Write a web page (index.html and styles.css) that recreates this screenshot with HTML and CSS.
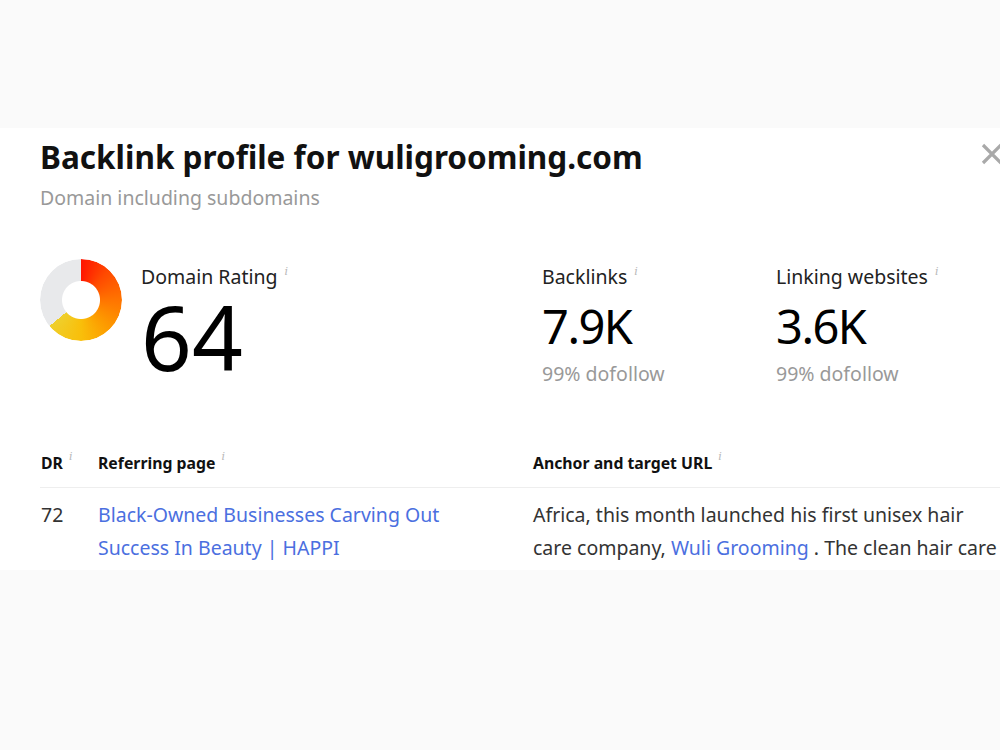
FILE: index.html
```html
<!DOCTYPE html>
<html lang="en">
<head>
    <meta charset="UTF-8">
    <meta name="viewport" content="width=device-width, initial-scale=1.0">
    <title>Backlink profile</title>
    <link rel="stylesheet" href="styles.css">
</head>
<body>
    <div class="panel">
        <button class="close" aria-label="Close">
            <svg width="24" height="24" viewBox="0 0 24 24"><path d="M3 3 L21 21 M21 3 L3 21" stroke="#a9a9a9" stroke-width="3.2"/></svg>
        </button>

        <h1 class="title">Backlink profile for wuligrooming.com</h1>
        <div class="subtitle">Domain including subdomains</div>

        <div class="stats">
            <div class="stat stat-dr">
                <div class="donut"></div>
                <div>
                    <div class="stat-label">Domain Rating <sup class="info">i</sup></div>
                    <div class="dr-value">64</div>
                </div>
            </div>
            <div class="stat stat-links">
                <div class="stat-label">Backlinks <sup class="info">i</sup></div>
                <div class="stat-value">7.9K</div>
                <div class="stat-note">99% dofollow</div>
            </div>
            <div class="stat stat-sites">
                <div class="stat-label">Linking websites <sup class="info">i</sup></div>
                <div class="stat-value">3.6K</div>
                <div class="stat-note">99% dofollow</div>
            </div>
        </div>

        <table class="links">
            <thead>
                <tr>
                    <th class="col-dr">DR <sup class="info">i</sup></th>
                    <th class="col-page">Referring page <sup class="info">i</sup></th>
                    <th class="col-anchor">Anchor and target URL <sup class="info">i</sup></th>
                </tr>
            </thead>
            <tbody>
                <tr>
                    <td>72</td>
                    <td><a href="#">Black-Owned Businesses Carving Out Success In Beauty | HAPPI</a></td>
                    <td>Africa, this month launched his first unisex hair care company, <a href="#">Wuli Grooming</a> . The clean hair care</td>
                </tr>
            </tbody>
        </table>
    </div>
</body>
</html>
```

FILE: styles.css
```css
body {
    margin: 0;
    background: #fafafa;
    font-family: "Noto Sans", "Open Sans", sans-serif;
    color: #333;
    overflow: hidden;
}

.panel {
    position: relative;
    margin-top: 128px;
    height: 442px;
    padding: 11px 0 0 40px;
    box-sizing: border-box;
    background: #fff;
    overflow: hidden;
}

/* close cross sits half outside the window */
.close {
    position: absolute;
    top: 14px;
    right: -4px;
    padding: 0;
    border: none;
    background: none;
}

.title {
    margin: 0;
    font-size: 31.5px;
    line-height: 36px;
    font-weight: 700;
    color: #111;
}

.subtitle {
    margin-top: 11px;
    font-size: 19.5px;
    line-height: 24px;
    color: #999;
}

.info {
    font-family: "DejaVu Serif", serif;
    font-style: italic;
    font-size: 11px;
    font-weight: 400;
    color: #b8b8b8;
    vertical-align: 9px;
    margin-left: 2px;
}

.stats {
    display: flex;
    margin-top: 46px;
}

.stat-dr {
    display: flex;
    gap: 19px;
    width: 502px;
}

.stat-links {
    width: 234px;
}

.donut {
    width: 82px;
    height: 82px;
    margin-top: 3px;
    border-radius: 50%;
    background: conic-gradient(#ff1400 0%, #ff4a00 12%, #ff7400 25%, #fd9c00 38%, #f9bf0a 50%, #efcf2c 64%, #e8e9eb 64%, #e8e9eb 100%);
    -webkit-mask: radial-gradient(circle, transparent 18.5px, #000 19.5px);
    mask: radial-gradient(circle, transparent 18.5px, #000 19.5px);
}

.stat-label {
    margin-top: 4px;
    font-size: 19.5px;
    line-height: 24px;
    color: #222;
}

.dr-value {
    margin-top: 5px;
    font-size: 89px;
    line-height: 86px;
    color: #000;
}

.stat-value {
    margin-top: 11px;
    font-size: 47px;
    line-height: 52px;
    letter-spacing: -1.5px;
    color: #000;
}

.stat-note {
    margin-top: 10px;
    font-size: 19.5px;
    line-height: 24px;
    color: #999;
}

.links {
    width: 963px;
    margin-top: 60px;
    border-collapse: collapse;
    table-layout: fixed;
}

.links th {
    padding: 0 0 13px 1px;
    text-align: left;
    font-size: 15.8px;
    line-height: 22px;
    font-weight: 700;
    color: #111;
    border-bottom: 1px solid #eeeeee;
}

.col-dr {
    width: 56px;
}

.col-page {
    width: 434px;
}

.col-anchor {
    width: 473px;
}

.links td {
    padding: 10px 0 0 1px;
    vertical-align: top;
    font-size: 19.5px;
    line-height: 33px;
    color: #333;
}

.links td:nth-child(2) {
    padding-right: 60px;
}

.links a {
    color: #4b6fe0;
    text-decoration: none;
}
```
